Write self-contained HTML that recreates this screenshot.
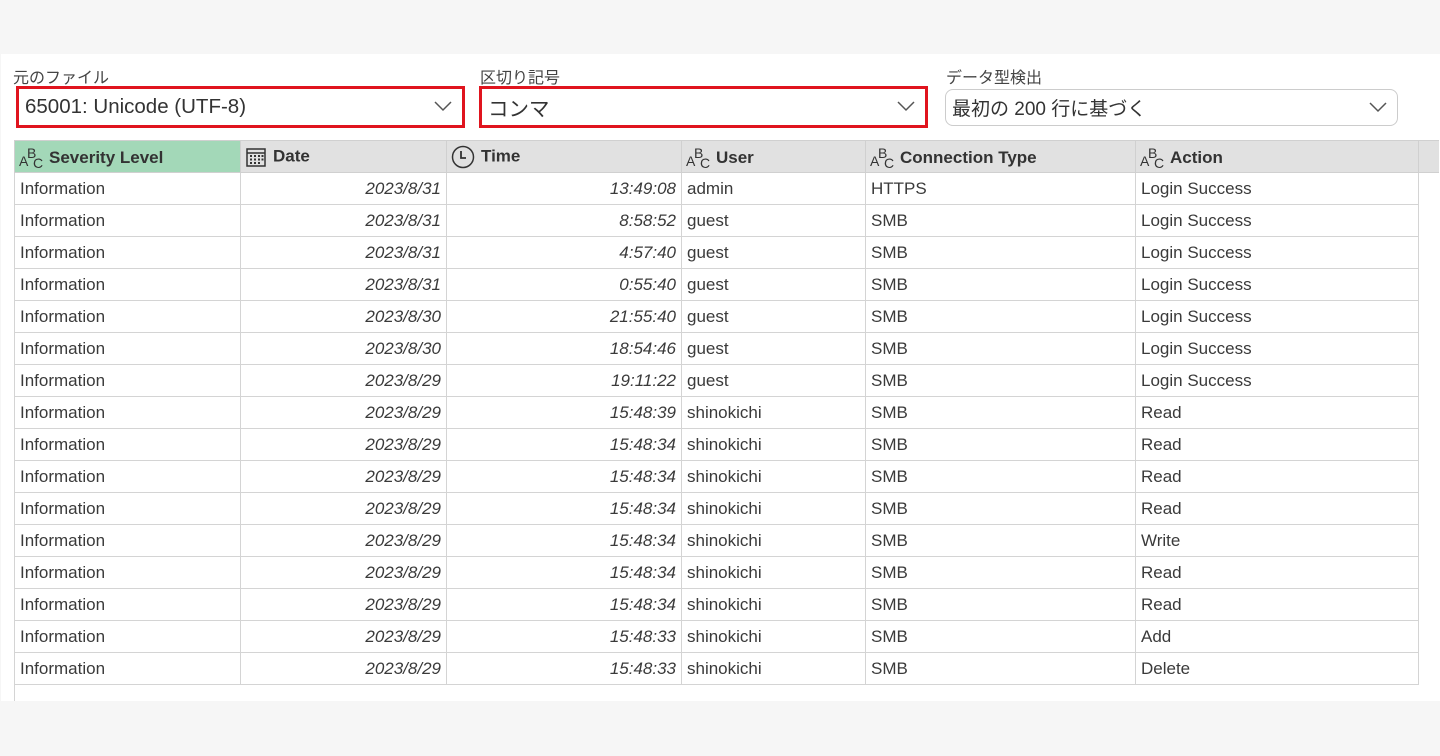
<!DOCTYPE html>
<html><head><meta charset="utf-8"><style>
*{margin:0;padding:0;box-sizing:border-box}
body{width:1440px;height:756px;background:#f6f6f6;position:relative;overflow:hidden;font-family:"Liberation Sans","Noto Sans CJK JP",sans-serif;color:#3a3a3a}
.panel{position:absolute;left:1px;top:54px;width:1439px;height:647px;background:#fff}
.lbl{position:absolute;top:64px;font-size:16px;color:#444}
.dd{position:absolute;background:#fff;font-size:20.5px;color:#333;padding-left:6px;display:flex;align-items:center}
.red{border:3px solid #e0141e}
.gray{border:1px solid #ccc;border-radius:8px}
.dd svg{position:absolute;right:10px;top:50%;margin-top:-6px}
table{position:absolute;left:14px;top:140px;border-collapse:collapse;font-size:17px;table-layout:fixed}
th{height:32px;background:#e1e1e1;border:1px solid #d0d0d0;text-align:left;font-weight:bold;color:#333;padding-left:4px;white-space:nowrap;vertical-align:middle}
td{height:32px;border:1px solid #d4d4d4;padding:0 5px;white-space:nowrap}
td.r{text-align:right;font-style:italic}
th.g{background:#a3d8b8}
.abc{font-weight:normal;font-size:14px;margin-right:6px;position:relative;display:inline-block;width:24px;height:24px;vertical-align:-6px}
.abc i{font-style:normal;position:absolute;line-height:1}
.ext{position:absolute;left:14px;top:682px;width:1px;height:19px;background:#d4d4d4}
</style></head><body>
<div class="panel"></div>
<div class="lbl" style="left:13px">元のファイル</div>
<div class="lbl" style="left:480px">区切り記号</div>
<div class="lbl" style="left:946px">データ型検出</div>
<div class="dd red" style="left:16px;top:86px;width:449px;height:42px">65001: Unicode (UTF-8)<svg width="18" height="11"><path d="M1 1L9 9L17 1" fill="none" stroke="#555" stroke-width="1.5"/></svg></div>
<div class="dd red" style="left:479px;top:86px;width:449px;height:42px">コンマ<svg width="18" height="11"><path d="M1 1L9 9L17 1" fill="none" stroke="#555" stroke-width="1.5"/></svg></div>
<div class="dd gray" style="left:945px;top:89px;width:453px;height:37px;font-size:19px">最初の 200 行に基づく<svg width="18" height="11"><path d="M1 1L9 9L17 1" fill="none" stroke="#555" stroke-width="1.5"/></svg></div>
<table>
<colgroup><col style="width:226px"><col style="width:206px"><col style="width:235px"><col style="width:184px"><col style="width:270px"><col style="width:283px"><col style="width:20px"></colgroup>
<tr>
<th class="g"><span class="abc"><i style="left:0;top:9px">A</i><i style="left:8px;top:1px">B</i><i style="left:14px;top:11px">C</i></span>Severity Level</th>
<th><svg width="22" height="22" style="vertical-align:middle;margin-right:6px"><rect x="2" y="3" width="18" height="17" fill="none" stroke="#333" stroke-width="1.5"/><line x1="2" y1="7" x2="20" y2="7" stroke="#333" stroke-width="1.5"/><g fill="#333"><rect x="5" y="9" width="2" height="2"/><rect x="9" y="9" width="2" height="2"/><rect x="13" y="9" width="2" height="2"/><rect x="5" y="12.5" width="2" height="2"/><rect x="9" y="12.5" width="2" height="2"/><rect x="13" y="12.5" width="2" height="2"/><rect x="5" y="16" width="2" height="2"/><rect x="9" y="16" width="2" height="2"/><rect x="13" y="16" width="2" height="2"/><rect x="16.5" y="9" width="2" height="2"/><rect x="16.5" y="12.5" width="2" height="2"/></g></svg>Date</th>
<th><svg width="24" height="24" style="vertical-align:middle;margin-right:6px"><circle cx="12" cy="12" r="10.5" fill="none" stroke="#333" stroke-width="1.5"/><path d="M10 6V13H15" fill="none" stroke="#333" stroke-width="1.8"/></svg>Time</th>
<th><span class="abc"><i style="left:0;top:9px">A</i><i style="left:8px;top:1px">B</i><i style="left:14px;top:11px">C</i></span>User</th>
<th><span class="abc"><i style="left:0;top:9px">A</i><i style="left:8px;top:1px">B</i><i style="left:14px;top:11px">C</i></span>Connection Type</th>
<th><span class="abc"><i style="left:0;top:9px">A</i><i style="left:8px;top:1px">B</i><i style="left:14px;top:11px">C</i></span>Action</th>
<th style="border-right:none"></th>
</tr>
<tr><td>Information</td><td class="r">2023/8/31</td><td class="r">13:49:08</td><td>admin</td><td>HTTPS</td><td>Login Success</td></tr>
<tr><td>Information</td><td class="r">2023/8/31</td><td class="r">8:58:52</td><td>guest</td><td>SMB</td><td>Login Success</td></tr>
<tr><td>Information</td><td class="r">2023/8/31</td><td class="r">4:57:40</td><td>guest</td><td>SMB</td><td>Login Success</td></tr>
<tr><td>Information</td><td class="r">2023/8/31</td><td class="r">0:55:40</td><td>guest</td><td>SMB</td><td>Login Success</td></tr>
<tr><td>Information</td><td class="r">2023/8/30</td><td class="r">21:55:40</td><td>guest</td><td>SMB</td><td>Login Success</td></tr>
<tr><td>Information</td><td class="r">2023/8/30</td><td class="r">18:54:46</td><td>guest</td><td>SMB</td><td>Login Success</td></tr>
<tr><td>Information</td><td class="r">2023/8/29</td><td class="r">19:11:22</td><td>guest</td><td>SMB</td><td>Login Success</td></tr>
<tr><td>Information</td><td class="r">2023/8/29</td><td class="r">15:48:39</td><td>shinokichi</td><td>SMB</td><td>Read</td></tr>
<tr><td>Information</td><td class="r">2023/8/29</td><td class="r">15:48:34</td><td>shinokichi</td><td>SMB</td><td>Read</td></tr>
<tr><td>Information</td><td class="r">2023/8/29</td><td class="r">15:48:34</td><td>shinokichi</td><td>SMB</td><td>Read</td></tr>
<tr><td>Information</td><td class="r">2023/8/29</td><td class="r">15:48:34</td><td>shinokichi</td><td>SMB</td><td>Read</td></tr>
<tr><td>Information</td><td class="r">2023/8/29</td><td class="r">15:48:34</td><td>shinokichi</td><td>SMB</td><td>Write</td></tr>
<tr><td>Information</td><td class="r">2023/8/29</td><td class="r">15:48:34</td><td>shinokichi</td><td>SMB</td><td>Read</td></tr>
<tr><td>Information</td><td class="r">2023/8/29</td><td class="r">15:48:34</td><td>shinokichi</td><td>SMB</td><td>Read</td></tr>
<tr><td>Information</td><td class="r">2023/8/29</td><td class="r">15:48:33</td><td>shinokichi</td><td>SMB</td><td>Add</td></tr>
<tr><td>Information</td><td class="r">2023/8/29</td><td class="r">15:48:33</td><td>shinokichi</td><td>SMB</td><td>Delete</td></tr>
</table>
<div class="ext"></div>
</body></html>
